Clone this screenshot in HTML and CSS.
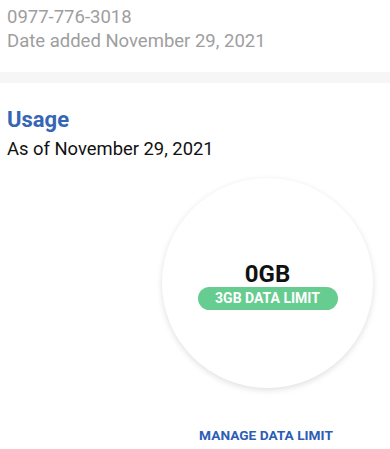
FILE: index.html
```html
<!DOCTYPE html>
<html lang="en">
<head>
  <meta charset="UTF-8" />
  <meta name="viewport" content="width=device-width, initial-scale=1.0" />
  <title>Usage</title>
  <link rel="stylesheet" href="styles.css">
</head>
<body>
  <div class="contact">
    <div class="contact-line">0977-776-3018</div>
    <div class="contact-line">Date added November 29, 2021</div>
  </div>
  <div class="divider"></div>
  <div class="usage">
    <h2 class="usage-title">Usage</h2>
    <div class="usage-date">As of November 29, 2021</div>
    <div class="usage-body">
      <div class="meter-col">
        <div class="meter">
          <div class="meter-value">0GB</div>
          <div class="meter-limit">3GB DATA LIMIT</div>
        </div>
        <a class="manage-link" href="#">MANAGE DATA LIMIT</a>
      </div>
    </div>
  </div>
</body>
</html>
```

FILE: styles.css
```css
body {
  font-family: Roboto, "Liberation Sans", sans-serif;
  background-color: #fff;
  margin: 0;
  padding: 0;
}
.contact {
  padding: 5px 7px 0;
}
.contact-line {
  font-size: 18.5px;
  line-height: 24px;
  color: #9e9e9e;
}
.divider {
  height: 11px;
  margin-top: 19px;
  background-color: #f6f6f6;
}
.usage {
  padding: 23px 7px 0;
}
.usage-title {
  margin: 0;
  font-size: 22px;
  line-height: 28px;
  font-weight: bold;
  color: #3565b5;
}
.usage-date {
  margin-top: 3px;
  font-size: 18.4px;
  line-height: 24px;
  color: #111;
}
.usage-body {
  display: flex;
  justify-content: flex-end;
  padding-right: 10px;
  margin-top: 17px;
}
.meter-col {
  display: flex;
  flex-direction: column;
  align-items: center;
  width: 211px;
}
.meter {
  width: 211px;
  height: 210px;
  border-radius: 50%;
  background: #fff;
  box-shadow: 0 2px 6px rgba(0, 0, 0, 0.13);
  display: flex;
  flex-direction: column;
  align-items: center;
  justify-content: center;
  padding-top: 4px;
  box-sizing: border-box;
}
.meter-value {
  font-size: 24px;
  line-height: 28px;
  font-weight: bold;
  color: #111;
}
.meter-limit {
  margin-top: -1px;
  width: 140px;
  height: 23px;
  line-height: 23px;
  border-radius: 12px;
  background-color: #66cc8f;
  color: #fff;
  font-size: 14px;
  font-weight: bold;
  text-align: center;
}
.manage-link {
  margin-top: 39px;
  padding-right: 3px;
  font-size: 13.7px;
  line-height: 16px;
  font-weight: bold;
  color: #2d5db5;
  text-decoration: none;
}
```
